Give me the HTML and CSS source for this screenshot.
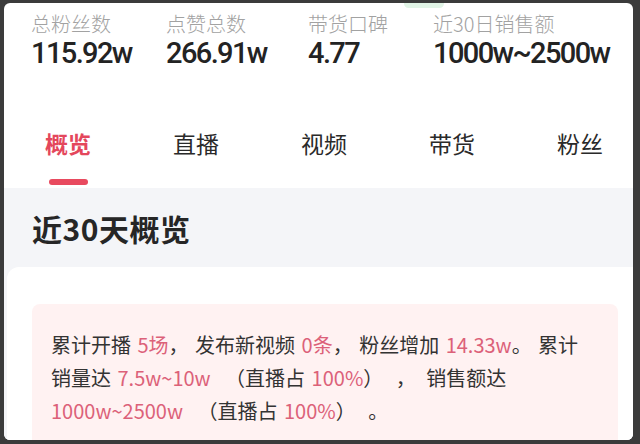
FILE: index.html
```html
<!DOCTYPE html>
<html lang="zh-CN">
<head>
<meta charset="utf-8">
<title>近30天概览</title>
<link rel="stylesheet" href="styles.css">
</head>
<body>
<div class="screen">
  <div class="notch"></div>
  <div class="stats">
    <div class="stat"><div class="label">总粉丝数</div><div class="value">115.92w</div></div>
    <div class="stat"><div class="label">点赞总数</div><div class="value">266.91w</div></div>
    <div class="stat"><div class="label">带货口碑</div><div class="value">4.77</div></div>
    <div class="stat"><div class="label">近30日销售额</div><div class="value">1000w~2500w</div></div>
  </div>
  <div class="tabs">
    <div class="tab active">概览</div>
    <div class="tab">直播</div>
    <div class="tab">视频</div>
    <div class="tab">带货</div>
    <div class="tab">粉丝</div>
  </div>
  <div class="overview">
    <h2 class="title">近30天概览</h2>
    <div class="card">
      <div class="summary">
        <p>累计开播 <span class="hl">5场</span>， 发布新视频 <span class="hl">0条</span>， 粉丝增加 <span class="hl">14.33w</span>。 累计<br>销量达 <span class="hl">7.5w~10w</span> <span class="paren">（直播占 <span class="hl">100%</span>）</span> <span class="punct">，</span> 销售额达<br><span class="hl">1000w~2500w</span> <span class="paren">（直播占 <span class="hl">100%</span>）</span> 。</p>
      </div>
    </div>
  </div>
</div>
</body>
</html>
```

FILE: styles.css
```css
* { box-sizing: border-box; }
html, body { margin: 0; padding: 0; }
body {
  background: #3b3b3b;
  width: 640px;
  height: 444px;
  overflow: hidden;
  font-family: "Noto Sans CJK SC", "Noto Sans", sans-serif;
}
.screen {
  position: relative;
  margin: 3px 7px 0 4px;
  height: 437px;
  background: #fff;
  border-radius: 6px;
  overflow: hidden;
}
.notch {
  position: absolute;
  left: 400px;
  top: -4px;
  width: 40px;
  height: 9px;
  border-radius: 5px;
  background: #e1f4e6;
}
.stats {
  display: grid;
  grid-template-columns: 135px 142px 125px auto;
  padding: 9px 0 0 27px;
}
.stat { display: flex; flex-direction: column; }
.label {
  font-size: 20px;
  line-height: 24px;
  font-weight: 300;
  color: #a2a2a2;
  white-space: nowrap;
}
.value {
  font-family: Roboto, "Liberation Sans", sans-serif;
  font-weight: 500;
  font-size: 29px;
  line-height: 34px;
  letter-spacing: -1.6px;
  color: #232323;
  white-space: nowrap;
}
.tabs {
  display: grid;
  grid-template-columns: repeat(5, 128px);
  margin-top: 58px;
}
.tab {
  display: flex;
  flex-direction: column;
  align-items: center;
  font-size: 23px;
  line-height: 30px;
  color: #2a2a2a;
  padding-bottom: 3px;
}
.tab::after {
  content: "";
  width: 39px;
  height: 6px;
  margin-top: 21px;
  border-radius: 3px;
  background: transparent;
}
.tab.active { color: #e4475c; font-weight: 700; }
.tab.active::after { background: #e84a5f; }
.overview {
  background: #f4f5f8;
  padding-top: 22px;
}
.title {
  margin: 0 0 21px 28px;
  font-size: 30px;
  line-height: 36px;
  font-weight: 700;
  letter-spacing: 0.5px;
  color: #262626;
}
.card {
  margin-left: 3px;
  background: #fff;
  border-radius: 12px 0 0 0;
  padding: 37px 15px 0 25px;
  height: 200px;
}
.summary {
  background: #fff2f2;
  border-radius: 8px;
  padding: 24px 10px 20px 19px;
  height: 180px;
}
.summary p {
  margin: 0;
  font-size: 20px;
  line-height: 33px;
  color: #333;
  white-space: nowrap;
  text-spacing-trim: space-all;
  word-spacing: 2px;
}
.paren { margin: 0 6px 0 8px; }
.punct { margin-right: 4px; }
.hl { color: #dc6179; }
```
